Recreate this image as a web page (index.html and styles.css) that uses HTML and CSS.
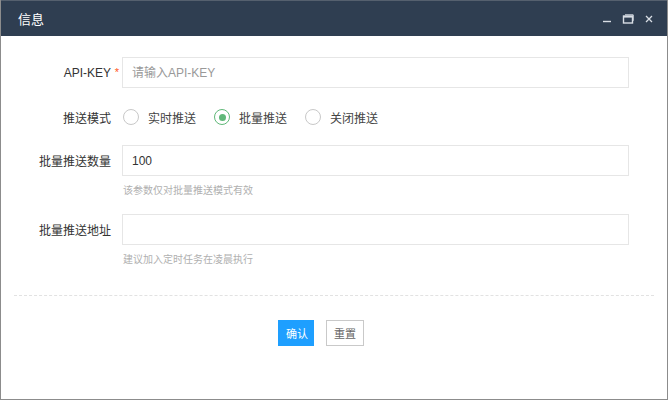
FILE: index.html
```html
<!DOCTYPE html>
<html lang="zh-CN">
<head>
  <meta charset="UTF-8">
  <title>信息</title>
  <link rel="stylesheet" href="styles.css">
</head>
<body>
  <div class="janela">
    <div class="titulo">
      <span class="titulo-texto">信息</span>
      <div class="titulo-botoes">
        <svg width="10" height="10" viewBox="0 0 10 10"><path d="M1 7.5h8" stroke="#d8dde4" stroke-width="1.4"/></svg>
        <svg width="12" height="10" viewBox="0 0 12 10"><rect x="1.5" y="2" width="9" height="7" fill="none" stroke="#d8dde4" stroke-width="1.4"/><path d="M1.5 2.8h9" stroke="#d8dde4" stroke-width="1.6"/><path d="M3 0.8h8.2v6" fill="none" stroke="#d8dde4" stroke-width="1"/></svg>
        <svg width="10" height="10" viewBox="0 0 10 10"><path d="M2 2l6 6M8 2l-6 6" stroke="#d8dde4" stroke-width="1.3"/></svg>
      </div>
    </div>

    <form class="formulario">
      <div class="linha">
        <label class="rotulo">API-KEY<span class="obrigatorio">*</span></label>
        <input class="campo" type="text" placeholder="请输入API-KEY">
      </div>

      <div class="linha linha-radio">
        <label class="rotulo">推送模式</label>
        <div class="opcoes">
          <span class="opcao"><i class="circulo"></i>实时推送</span>
          <span class="opcao"><i class="circulo marcado"></i>批量推送</span>
          <span class="opcao"><i class="circulo"></i>关闭推送</span>
        </div>
      </div>

      <div class="linha">
        <label class="rotulo">批量推送数量</label>
        <input class="campo" type="text" value="100">
      </div>
      <div class="dica">该参数仅对批量推送模式有效</div>

      <div class="linha">
        <label class="rotulo">批量推送地址</label>
        <input class="campo" type="text">
      </div>
      <div class="dica">建议加入定时任务在凌晨执行</div>

      <div class="separador"></div>

      <div class="acoes">
        <button type="button" class="btn btn-azul">确认</button>
        <button type="button" class="btn btn-branco">重置</button>
      </div>
    </form>
  </div>
</body>
</html>
```

FILE: styles.css
```css
* {
  box-sizing: border-box;
  margin: 0;
  padding: 0;
  font-family: "Liberation Sans", "Noto Sans CJK SC", sans-serif;
}

body, html {
  width: 668px;
  height: 400px;
  overflow: hidden;
  background: #fff;
}

.janela {
  height: 400px;
  border: 1px solid #8c8c8c;
  border-top: none;
  display: flex;
  flex-direction: column;
}

.titulo {
  height: 36px;
  background: #2f3e51;
  border-top: 1px solid #55606e;
  display: flex;
  align-items: center;
  justify-content: space-between;
  padding: 0 13px 0 17px;
  color: #fff;
  flex-shrink: 0;
}

.titulo-texto {
  font-size: 13px;
}

.titulo-botoes {
  display: flex;
  align-items: center;
  gap: 10px;
}

.formulario {
  padding: 21px 38px 0 0;
  font-size: 12px;
  color: #333;
}

.linha {
  display: flex;
  align-items: center;
  margin-bottom: 14px;
}

.rotulo {
  position: relative;
  width: 121px;
  padding-right: 11px;
  text-align: right;
  flex-shrink: 0;
  font-size: 12px;
  color: #333;
}

.obrigatorio {
  position: absolute;
  right: 3px;
  top: 0;
  color: #ff5722;
  font-size: 11px;
}

.campo {
  flex: 1;
  height: 31px;
  border: 1px solid #e6e6e6;
  padding: 0 9px;
  font-size: 12px;
  color: #333;
  outline: none;
}

.campo::placeholder {
  color: #999;
}

.linha-radio {
  height: 30px;
  margin-bottom: 13px;
}

.opcoes {
  display: flex;
  align-items: center;
}

.opcao {
  display: flex;
  align-items: center;
  margin-right: 17px;
  font-size: 12px;
  color: #444;
}

.circulo {
  width: 16px;
  height: 16px;
  border: 1px solid #c8c8c8;
  border-radius: 50%;
  margin: 0 9px 0 1px;
  position: relative;
}

.circulo.marcado {
  border-color: #5fb878;
}

.circulo.marcado::after {
  content: "";
  position: absolute;
  left: 3.5px;
  top: 3.5px;
  width: 7px;
  height: 7px;
  border-radius: 50%;
  background: #5fb878;
}

.dica {
  margin: -8px 0 14px 122px;
  font-size: 10px;
  line-height: 18px;
  color: #b0b0b0;
}

.separador {
  margin: 26px 0 0 13px;
  width: 640px;
  border-top: 1px dashed #e2e2e2;
}

.acoes {
  display: flex;
  justify-content: center;
  gap: 12px;
  margin: 24px 0 0 12px;
}

.btn {
  height: 26px;
  padding: 0 7px;
  font-size: 11px;
  border: 1px solid #c9c9c9;
  cursor: pointer;
  white-space: nowrap;
}

.btn-azul {
  background: #1e9fff;
  border-color: #1e9fff;
  color: #fff;
  width: 36px;
}

.btn-branco {
  background: #fff;
  color: #666;
  width: 38px;
}
```
